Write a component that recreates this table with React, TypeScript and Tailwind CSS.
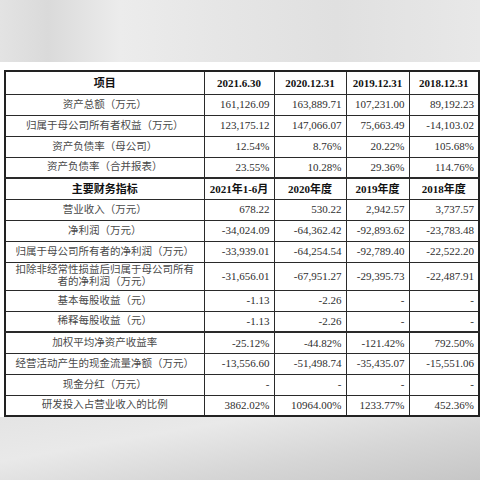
import React from 'react';

type Row = {
  label: React.ReactNode;
  values: string[];
  tall?: boolean;
  thickTop?: boolean;
};

const BALANCE: Row[] = [
  { label: '资产总额（万元）', values: ['161,126.09', '163,889.71', '107,231.00', '89,192.23'] },
  { label: '归属于母公司所有者权益（万元）', values: ['123,175.12', '147,066.07', '75,663.49', '-14,103.02'] },
  { label: '资产负债率（母公司）', values: ['12.54%', '8.76%', '20.22%', '105.68%'] },
  { label: '资产负债率（合并报表）', values: ['23.55%', '10.28%', '29.36%', '114.76%'] },
];

const INDICATORS: Row[] = [
  { label: '营业收入（万元）', values: ['678.22', '530.22', '2,942.57', '3,737.57'] },
  { label: '净利润（万元）', values: ['-34,024.09', '-64,362.42', '-92,893.62', '-23,783.48'] },
  { label: '归属于母公司所有者的净利润（万元）', values: ['-33,939.01', '-64,254.54', '-92,789.40', '-22,522.20'] },
  {
    label: (
      <>
        扣除非经常性损益后归属于母公司所有
        <br />
        者的净利润（万元）
      </>
    ),
    values: ['-31,656.01', '-67,951.27', '-29,395.73', '-22,487.91'],
    tall: true,
  },
  { label: '基本每股收益（元）', values: ['-1.13', '-2.26', '-', '-'] },
  { label: '稀释每股收益（元）', values: ['-1.13', '-2.26', '-', '-'] },
  { label: '加权平均净资产收益率', values: ['-25.12%', '-44.82%', '-121.42%', '792.50%'], thickTop: true },
  { label: '经营活动产生的现金流量净额（万元）', values: ['-13,556.60', '-51,498.74', '-35,435.07', '-15,551.06'] },
  { label: '现金分红（万元）', values: ['-', '-', '-', '-'] },
  { label: '研发投入占营业收入的比例', values: ['3862.02%', '10964.00%', '1233.77%', '452.36%'] },
];

const FONT = { fontFamily: '"Liberation Serif", "Noto Sans CJK SC", serif' };

function HeaderRow({ cells, title, thickTop }: { cells: string[]; title: string; thickTop?: boolean }) {
  return (
    <tr className={`h-[21px] ${thickTop ? 'border-t-2' : 'border-t'} border-[#2a2a2a]`}>
      <td className="border-r border-[#2a2a2a] text-center text-[11px] font-bold text-[#111] p-0">{title}</td>
      {cells.map((c, i) => (
        <td key={i} className="border-r border-[#2a2a2a] text-center text-[11px] font-bold text-[#111] p-0 whitespace-nowrap">
          {c}
        </td>
      ))}
    </tr>
  );
}

function DataRow({ row }: { row: Row }) {
  return (
    <tr
      className={`${row.tall ? 'h-[28px]' : 'h-[21px]'} ${row.thickTop ? 'border-t-2' : 'border-t'} border-[#2a2a2a]`}
    >
      <td className="border-r border-[#2a2a2a] text-center text-[10.5px] leading-[12px] text-[#4a4a4a] p-0 whitespace-nowrap">
        {row.label}
      </td>
      {row.values.map((v, i) => (
        <td
          key={i}
          className="border-r border-[#2a2a2a] text-right text-[11px] text-[#2e2e2e] pr-[4px] pl-0 py-0 whitespace-nowrap"
        >
          {v}
        </td>
      ))}
    </tr>
  );
}

export default function App() {
  return (
    <div className="w-[480px] h-[480px] flex flex-col overflow-hidden" style={FONT}>
      <div className="h-[62px] bg-[linear-gradient(90deg,#e3e3e3_0%,#dadada_10%,#ececec_25%,#e6e6e6_45%,#e0e0e0_70%,#e8e8e8_100%)]" />
      <div className="h-[355px] bg-white pt-[8px] pl-[4px]">
        <table className="table-fixed border-collapse border-2 border-[#222] w-[474px]">
          <colgroup>
            <col className="w-[199px]" />
            <col className="w-[70px]" />
            <col className="w-[72px]" />
            <col className="w-[63px]" />
            <col className="w-[70px]" />
          </colgroup>
          <tbody>
            <tr className="h-[23px]">
              <td className="border-r border-[#2a2a2a] text-center text-[11px] font-bold text-[#111] p-0">项目</td>
              {['2021.6.30', '2020.12.31', '2019.12.31', '2018.12.31'].map((c) => (
                <td key={c} className="border-r border-[#2a2a2a] text-center text-[11px] font-bold text-[#111] p-0">
                  {c}
                </td>
              ))}
            </tr>
            {BALANCE.map((r, i) => (
              <DataRow key={i} row={r} />
            ))}
            <HeaderRow title="主要财务指标" cells={['2021年1-6月', '2020年度', '2019年度', '2018年度']} thickTop />
            {INDICATORS.map((r, i) => (
              <DataRow key={i} row={r} />
            ))}
          </tbody>
        </table>
      </div>
      <div className="flex-1 bg-[linear-gradient(170deg,#e4e4e4_0%,#e9e9e9_30%,#d6d6d6_65%,#c6c6c6_100%)]" />
    </div>
  );
}
